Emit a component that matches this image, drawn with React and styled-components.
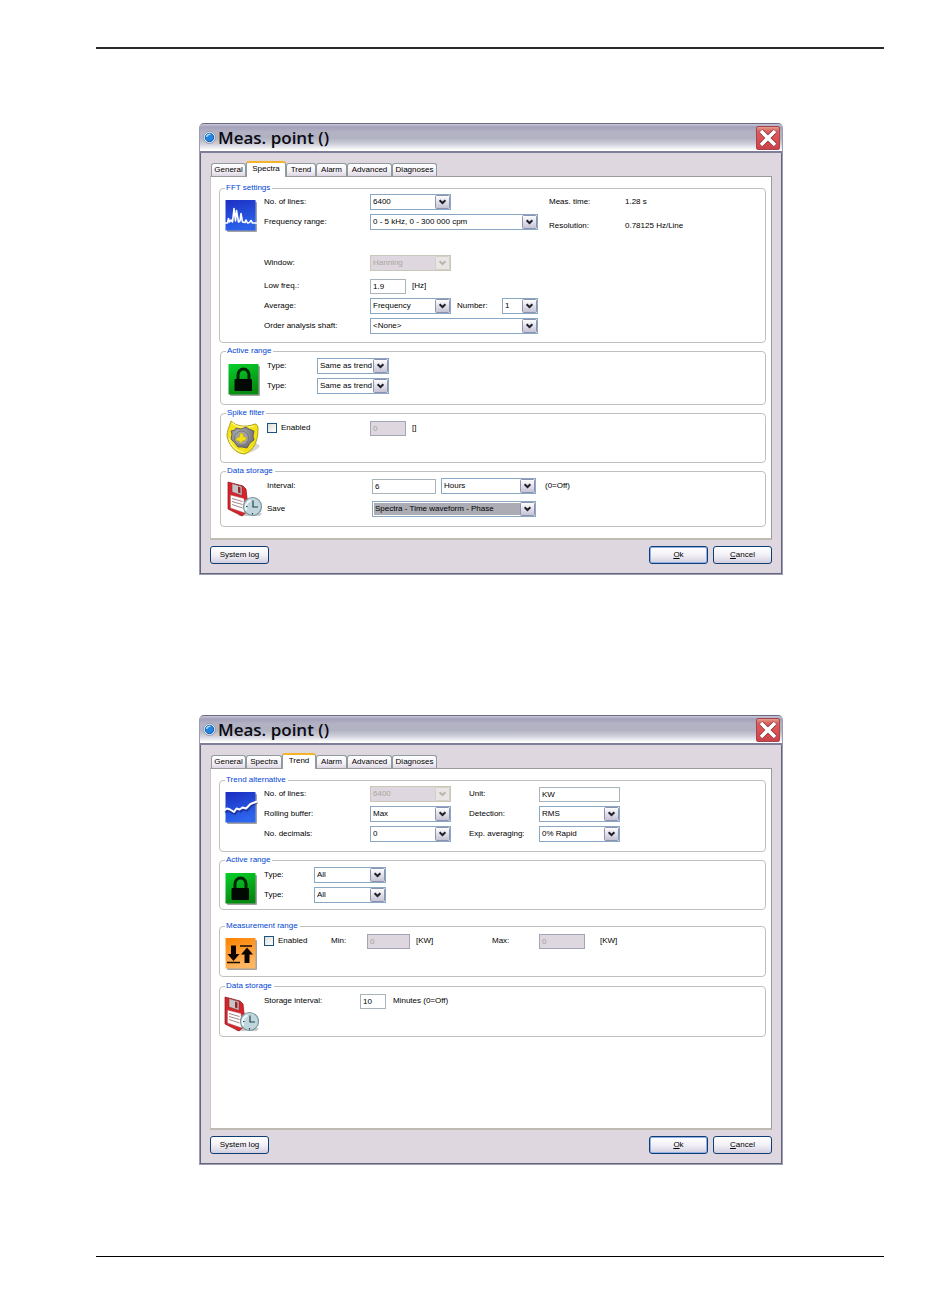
import React, { useId } from "react";
import styled, { createGlobalStyle, css } from "styled-components";

const GlobalStyle = createGlobalStyle`
  * { box-sizing: border-box; }
  body {
    margin: 0;
    background: #fff;
    color: #000;
    font: 8px/12px "Liberation Sans", Arial, sans-serif;
  }
`;

const Page = styled.main`
  min-height: 100vh;
  padding: 47px 66px 49px 96px;
  display: flex;
  flex-direction: column;
`;

const Rule = styled.hr`
  width: 100%;
  margin: 0;
  border: 0;
  border-top: 2px solid #2b2b2b;
`;

const EndRule = styled(Rule)`
  margin-top: auto;
  border-top: 1px solid #000;
`;

const Dialog = styled.section`
  margin: ${(p) => p.$space}px 101px 0 103px;
  border: 1px solid #9c9cb2;
  border-top-color: #6a6a82;
  border-radius: 5px 5px 0 0;
  background: #ded7df;
`;

const TitleBar = styled.header`
  height: 29px;
  padding: 0 2px 0 3px;
  display: flex;
  align-items: center;
  gap: 2px;
  border-bottom: 2px solid #7e7e98;
  border-radius: 4px 4px 0 0;
  background: linear-gradient(#c9c8d6 0, #a3a1ba 3px, #b4b3c5 8px, #b0b1c1 14px, #cfcfda 20px, #fff 26px);
`;

const Title = styled.h2`
  flex: 1;
  margin: 0;
  font: 600 17px/24px "Open Sans", "Noto Sans", sans-serif;
  color: #0a0a12;
`;

const CloseButton = styled.button`
  width: 24px;
  height: 24px;
  padding: 0;
  display: grid;
  place-items: center;
  border: 1px solid #a8434f;
  border-radius: 2px;
  background: linear-gradient(#e0a08a 0, #d9605f 4px, #d9504f 60%, #c9434a);
`;

const Body = styled.div`
  padding: 8px 9px 9px;
  border: 1px solid #64647e;
  border-top: 0;
`;

const Tabs = styled.div`
  height: 15px;
  padding-left: 1px;
  display: flex;
  align-items: flex-end;
`;

const Tab = styled.button`
  width: ${(p) => p.$width}px;
  height: 13px;
  padding: 0;
  border: 1px solid #919b9c;
  border-bottom: 0;
  border-radius: 3px 3px 0 0;
  background: linear-gradient(#fff, #f3f0f5 60%, #dcd6e2);
  color: #000;
  font: inherit;
  text-align: center;
  white-space: nowrap;

  ${(p) =>
    p.$active &&
    css`
      height: 16px;
      margin-bottom: -1px;
      padding-bottom: 3px;
      border-top: 2px solid #f5b32a;
      background: #fff;
      position: relative;
    `}
`;

const Panel = styled.div`
  padding: 5px 5px ${(p) => p.$bottom}px 8px;
  border: 1px solid #9a9a9a;
  border-left-color: #c8c6c6;
  border-bottom: 2px solid #bdbbb2;
  background: #fff;
`;

const GroupBox = styled.fieldset`
  min-width: 0;
  min-height: ${(p) => p.$height}px;
  margin: ${(p) => p.$space || 0}px 0 0 ${(p) => (p.$inset ? 1 : 0)}px;
  padding: 0 0 0 ${(p) => (p.$inset ? 7 : 5)}px;
  border: 1px solid #c0c0c0;
  border-radius: 4px;
`;

const Legend = styled.legend`
  margin-left: ${(p) => (p.$inset ? -2 : 0)}px;
  padding: 0 2px 0 1px;
  color: #0046d5;
`;

const GroupBody = styled.div`
  display: flex;
  align-items: flex-start;
`;

const IconSlot = styled.div`
  flex: none;
  width: 39px;
  padding-top: ${(p) => p.$top}px;

  svg { display: block; overflow: visible; }
`;

const Rows = styled.div`
  flex: none;
  padding-top: ${(p) => p.$top || 0}px;
`;

const Row = styled.div`
  height: 16px;
  margin-top: ${(p) => p.$space || 0}px;
  display: flex;
  align-items: center;
  white-space: nowrap;
`;

const Label = styled.label`
  flex: none;
  width: ${(p) => (p.$width ? p.$width + "px" : "auto")};
`;

const Text = styled.span`
  flex: none;
  margin-left: ${(p) => p.$space || 0}px;
  width: ${(p) => (p.$width ? p.$width + "px" : "auto")};
`;

const TextBox = styled.input`
  width: ${(p) => p.$width}px;
  height: 15px;
  padding: 0 2px;
  border: 1px solid #a9b3ba;
  border-radius: 0;
  background: #fff;
  color: #000;
  font: inherit;

  &:disabled {
    border-color: #a2a6b4;
    background: #ded7df;
    color: #a5a295;
  }
`;

const SelectFrame = styled.span`
  flex: none;
  width: ${(p) => p.$width}px;
  height: 16px;
  margin-left: ${(p) => p.$space || 0}px;
  display: grid;

  > * { grid-area: 1 / 1; }
  > svg { justify-self: end; align-self: center; margin-right: 1px; pointer-events: none; }
`;

const SelectControl = styled.select`
  appearance: none;
  width: 100%;
  height: 16px;
  padding: 0 15px 0 2px;
  border: 1px solid #8aa7c4;
  border-radius: 0;
  background: #fff;
  color: #000;
  font: inherit;

  ${(p) =>
    p.$selected &&
    css`
      background: #acacb4;
      box-shadow: inset 0 0 0 1px #fff;
    `}

  &:disabled {
    border-color: #c9c7ba;
    background: #ded7df;
    color: #a9a698;
    opacity: 1;
  }
`;

const CheckBox = styled.input`
  appearance: none;
  flex: none;
  width: 10px;
  height: 10px;
  margin: 0 4px 0 0;
  border: 1px solid #1d5281;
  background: linear-gradient(135deg, #dcdcd7, #fff);
`;

const Facts = styled.dl`
  margin: 0 0 0 11px;
  padding-top: 2px;
  display: grid;
  grid-template-columns: 76px auto;
  row-gap: 12px;

  dt, dd { margin: 0; white-space: nowrap; }
`;

const Footer = styled.footer`
  padding-top: 6px;
  display: flex;
  gap: 5px;
`;

const PushButton = styled.button`
  width: 59px;
  height: 18px;
  padding: 0;
  border: 1px solid #0e3d74;
  border-radius: 3px;
  background: linear-gradient(#fff, #f2f0f6 50%, #d3cfe0);
  color: #000;
  font: inherit;

  &:first-child { margin-right: auto; }

  ${(p) =>
    p.$primary &&
    css`
      box-shadow: inset 0 0 0 1px #8fb0ea;
    `}
`;

function Arrow({ disabled }) {
  return (
    <svg width="15" height="14" viewBox="0 0 15 14">
      <defs>
        <linearGradient id="arrowFace" x1="0" y1="0" x2="0" y2="1">
          <stop offset="0" stopColor="#fff" />
          <stop offset="1" stopColor="#c3c1d3" />
        </linearGradient>
      </defs>
      <rect x="0.5" y="0.5" width="14" height="13" rx="1" fill={disabled ? "#e8e5e4" : "url(#arrowFace)"} stroke={disabled ? "#d3d0c6" : "#8c93b0"} />
      <path d="M4.6 5.2 7.5 8 10.4 5.2" fill="none" stroke={disabled ? "#b9b6ab" : "#22222c"} strokeWidth="2" />
    </svg>
  );
}

function Select({ id, width, value, disabled, selected, space, label }) {
  return (
    <SelectFrame $width={width} $space={space}>
      <SelectControl id={id} aria-label={label} disabled={disabled} $selected={selected}>
        <option>{value}</option>
      </SelectControl>
      <Arrow disabled={disabled} />
    </SelectFrame>
  );
}

function SelectRow({ label, labelWidth, space, children, ...select }) {
  const id = useId();
  return (
    <Row $space={space}>
      <Label htmlFor={id} $width={labelWidth}>{label}</Label>
      <Select id={id} {...select} />
      {children}
    </Row>
  );
}

function InputRow({ label, labelWidth, space, width, value, children }) {
  const id = useId();
  return (
    <Row $space={space}>
      <Label htmlFor={id} $width={labelWidth}>{label}</Label>
      <TextBox id={id} $width={width} defaultValue={value} />
      {children}
    </Row>
  );
}

function Group({ title, inset, height, space, icon, iconTop, top, children, aside }) {
  return (
    <GroupBox $height={height} $space={space} $inset={inset}>
      <Legend $inset={inset}>{title}</Legend>
      <GroupBody>
        <IconSlot $top={iconTop}>{icon}</IconSlot>
        <Rows $top={top}>{children}</Rows>
        {aside}
      </GroupBody>
    </GroupBox>
  );
}

function Tile({ id, from, to, children }) {
  return (
    <svg width="32" height="32" viewBox="0 0 32 32">
      <defs>
        <linearGradient id={id} x1="0" y1="0" x2="0.3" y2="1">
          <stop offset="0" stopColor={from} />
          <stop offset="1" stopColor={to} />
        </linearGradient>
      </defs>
      <rect x="2" y="2" width="30" height="30" rx="1" fill="#555" opacity="0.55" />
      <rect x="0.5" y="0" width="30" height="30.5" fill={`url(#${id})`} />
      {children}
    </svg>
  );
}

const SpectraIcon = () => (
  <Tile id="spectraTile" from="#1c2fc4" to="#2c62ea">
    <path d="M-1 23H2.500L3.500 18.500l1 3.500 1.500-2L7.500 22 9 8.500 10.500 21 11.500 10.500 13.500 22l1.500-1 1-7.500 1.500 8.500 2.500.5 1-2.500 1.500 3 2-.5 1.500-2 1.500 2.500H32" fill="none" stroke="#fff" strokeWidth="1.600" strokeLinejoin="round" />
  </Tile>
);

const TrendIcon = () => (
  <Tile id="trendTile" from="#1a2cc0" to="#2d66ee">
    <path d="M0 20.500 3 18.500 6 20l4 2 2.500-4 3 1.500 3-2 3.500 1 4.500-5 6-3" fill="none" stroke="#101860" strokeWidth="2" opacity="0.5" />
    <path d="M-1 18.500 2 16.500l3 1 4 2.500 2.500-3.500 3 1 3-2 3.500 1 4.500-4.500 6.500-2.500" fill="none" stroke="#fff" strokeWidth="2" strokeLinejoin="round" />
  </Tile>
);

const LockIcon = () => (
  <Tile id="lockTile" from="#05d02a" to="#078a10">
    <path d="M10 16V11a5.500 6 0 0 1 11 0v5" fill="none" stroke="#020" strokeWidth="3" />
    <rect x="6.500" y="15" width="17.500" height="12" rx="1" fill="#020802" />
  </Tile>
);

const RangeIcon = () => (
  <Tile id="rangeTile" from="#fb8200" to="#ffb762">
    <path d="M2 24.500h13M15 8h12" stroke="#180c00" strokeWidth="1.500" />
    <path d="M6 7.500h5v8.500h3.500L8.500 23 2.500 16H6zM19.500 25h5v-8.500H28L22 9.500l-6 7h3.500z" fill="#0c0600" />
  </Tile>
);

const SpikeIcon = () => (
  <svg width="33" height="35" viewBox="0 0 33 35">
    <defs>
      <radialGradient id="spikeGear" cx="0.4" cy="0.4" r="0.7">
        <stop offset="0" stopColor="#c2c2c6" />
        <stop offset="1" stopColor="#65656a" />
      </radialGradient>
    </defs>
    <path d="M14 33c7 0 16-4 18-8l-4-3z" fill="#bbb" opacity="0.6" />
    <path d="M3 0c5 5 14 7 24 3 2 0 3 2 3 5 0 12-4 21-13 25C8 33 1 25-1 15-1 10 1 6 3 0z" fill="#f2e216" stroke="#9d9200" strokeWidth="0.800" />
    <path d="M4 2c6 5 15 5 22 3M1 17c2 8 7 13 15 14.500" fill="none" stroke="#fff98a" strokeWidth="1.200" />
    <path d="m8 7 5 1 5-2 3 2 5 2-1 5 1 4-4 3-3 5-5-1-4 0-3-4-4-4 1-5-1-3 4-1z" fill="url(#spikeGear)" stroke="#55555a" strokeWidth="0.800" />
    <circle cx="13.500" cy="17" r="7" fill="#a2a2a8" stroke="#75757a" />
    <path d="m12 12 3 .5.500 3 3 1-1 3-3 .5-1.500 2.500-2-2.500-3.500-.5 1-2.500 3-1z" fill="#f3de18" stroke="#aa9c10" strokeWidth="0.500" />
  </svg>
);

const StorageIcon = () => (
  <svg width="34" height="35" viewBox="0 0 34 35">
    <path d="M10 34h22l2-3H14z" fill="#aaa" opacity="0.6" />
    <path d="M0 0 15 4l3 3 1 9 2 12-7 6L0 27z" fill="#d9232b" stroke="#8c1219" strokeWidth="0.700" />
    <path d="M4 1.500 14 4.500V13.500L4 10z" fill="#c5c5c8" stroke="#873036" strokeWidth="0.600" />
    <path d="M10 4.500 12.500 5.500v6L10 10.500z" fill="#97252c" />
    <path d="M2.500 13 16 16.500 17 31 2.500 26z" fill="#fff" stroke="#9a6a6d" strokeWidth="0.500" />
    <path d="m4 16.500 10.500 3M4 19.500l10.500 3M4 22.500l10.500 3.500" stroke="#9c7779" strokeWidth="0.900" />
    <circle cx="24.500" cy="24.500" r="9" fill="#bfd6dd" stroke="#7c969f" strokeWidth="1.200" />
    <path d="M18.500 28.500a7 7 0 0 1 4-10" fill="none" stroke="#eef8fa" strokeWidth="2" />
    <path d="M25 18.500v6.500H30M18 24.500h1.500M24.500 31v1.500" fill="none" stroke="#24424c" strokeWidth="1.200" />
  </svg>
);

const AppIcon = () => (
  <svg width="13" height="13" viewBox="0 0 13 13">
    <circle cx="6.500" cy="6.500" r="6" fill="#e4eaf2" stroke="#8d9aae" />
    <circle cx="6.500" cy="6.500" r="4.200" fill="#2385e2" stroke="#175aa8" />
    <path d="M3.500 6a3 3 0 0 1 4-2.500" fill="none" stroke="#a9dcff" strokeWidth="1.500" />
  </svg>
);

const CloseIcon = () => (
  <svg width="18" height="18" viewBox="0 0 18 18">
    <path d="m2 2 14 14m0-14-14 14" stroke="#7d2730" strokeWidth="5" />
    <path d="m2 2 14 14m0-14-14 14" stroke="#fff" strokeWidth="3.800" />
  </svg>
);

const TABS = [
  ["General", 35],
  ["Spectra", 36],
  ["Trend", 30],
  ["Alarm", 31],
  ["Advanced", 45],
  ["Diagnoses", 45],
];

function MeasDialog({ active, space, bottom, children }) {
  return (
    <Dialog $space={space} aria-label={`Meas. point, ${active}`}>
      <TitleBar>
        <AppIcon />
        <Title>Meas. point ()</Title>
        <CloseButton type="button" aria-label="Close"><CloseIcon /></CloseButton>
      </TitleBar>
      <Body>
        <Tabs role="tablist">
          {TABS.map(([name, width]) => (
            <Tab
              key={name}
              type="button"
              role="tab"
              aria-selected={name === active}
              $active={name === active}
              $width={name === active ? width + 4 : width}
            >
              {name}
            </Tab>
          ))}
        </Tabs>
        <Panel $bottom={bottom}>{children}</Panel>
        <Footer>
          <PushButton type="button">System log</PushButton>
          <PushButton type="button" $primary><u>O</u>k</PushButton>
          <PushButton type="button"><u>C</u>ancel</PushButton>
        </Footer>
      </Body>
    </Dialog>
  );
}

function SpectraDialog() {
  const enabled = useId();
  return (
    <MeasDialog active="Spectra" space={74} bottom={11}>
      <Group
        title="FFT settings"
        height={161}
        icon={<SpectraIcon />}
        iconTop={6}
        aside={
          <Facts>
            <dt>Meas. time:</dt><dd>1.28 s</dd>
            <dt>Resolution:</dt><dd>0.78125 Hz/Line</dd>
          </Facts>
        }
      >
        <SelectRow label="No. of lines:" labelWidth={106} width={81} value="6400" />
        <SelectRow space={4} label="Frequency range:" labelWidth={106} width={168} value="0 - 5 kHz, 0 - 300 000 cpm" />
        <SelectRow space={25} label="Window:" labelWidth={106} width={81} value="Hanning" disabled />
        <InputRow space={7} label="Low freq.:" labelWidth={106} width={36} value="1.9">
          <Text $space={6}>[Hz]</Text>
        </InputRow>
        <SelectRow space={4} label="Average:" labelWidth={106} width={81} value="Frequency">
          <Text $space={6} $width={45}>Number:</Text>
          <Select label="Number" width={36} value="1" />
        </SelectRow>
        <SelectRow space={4} label="Order analysis shaft:" labelWidth={106} width={168} value="<None>" />
      </Group>

      <Group title="Active range" inset height={60} space={2} icon={<LockIcon />} iconTop={7} top={1}>
        <SelectRow label="Type:" labelWidth={50} width={72} value="Same as trend" />
        <SelectRow space={4} label="Type:" labelWidth={50} width={72} value="Same as trend" />
      </Group>

      <Group title="Spike filter" inset height={56} space={2} icon={<SpikeIcon />} iconTop={2} top={1}>
        <Row>
          <CheckBox id={enabled} type="checkbox" />
          <Label htmlFor={enabled} $width={89}>Enabled</Label>
          <TextBox $width={36} defaultValue="0" disabled aria-label="Spike filter value" />
          <Text $space={6}>[]</Text>
        </Row>
      </Group>

      <Group title="Data storage" inset height={62} space={2} icon={<StorageIcon />} iconTop={5} top={1}>
        <InputRow label="Interval:" labelWidth={105} width={64} value="6">
          <Select label="Interval unit" space={5} width={95} value="Hours" />
          <Text $space={9}>(0=Off)</Text>
        </InputRow>
        <SelectRow space={7} label="Save" labelWidth={105} width={164} value="Spectra - Time waveform - Phase" selected />
      </Group>
    </MeasDialog>
  );
}

const SecondColumn = styled(Rows)`
  margin-left: 18px;
`;

function TrendDialog() {
  const enabled = useId();
  const min = useId();
  const max = useId();
  return (
    <MeasDialog active="Trend" space={140} bottom={91}>
      <Group
        title="Trend alternative"
        height={78}
        icon={<TrendIcon />}
        iconTop={6}
        aside={
          <SecondColumn>
            <InputRow label="Unit:" labelWidth={70} width={81} value="KW" />
            <SelectRow space={4} label="Detection:" labelWidth={70} width={81} value="RMS" />
            <SelectRow space={4} label="Exp. averaging:" labelWidth={70} width={81} value="0% Rapid" />
          </SecondColumn>
        }
      >
        <SelectRow label="No. of lines:" labelWidth={106} width={81} value="6400" disabled />
        <SelectRow space={4} label="Rolling buffer:" labelWidth={106} width={81} value="Max" />
        <SelectRow space={4} label="No. decimals:" labelWidth={106} width={81} value="0" />
      </Group>

      <Group title="Active range" height={56} space={2} icon={<LockIcon />} iconTop={7} top={1}>
        <SelectRow label="Type:" labelWidth={50} width={72} value="All" />
        <SelectRow space={4} label="Type:" labelWidth={50} width={72} value="All" />
      </Group>

      <Group title="Measurement range" height={57} space={10} icon={<RangeIcon />} iconTop={6} top={1}>
        <Row>
          <CheckBox id={enabled} type="checkbox" />
          <Label htmlFor={enabled} $width={53}>Enabled</Label>
          <Label htmlFor={min} $width={36}>Min:</Label>
          <TextBox id={min} $width={43} defaultValue="0" disabled />
          <Text $space={6} $width={76}>[KW]</Text>
          <Label htmlFor={max} $width={47}>Max:</Label>
          <TextBox id={max} $width={46} defaultValue="0" disabled />
          <Text $space={15}>[KW]</Text>
        </Row>
      </Group>

      <Group title="Data storage" height={57} space={3} icon={<StorageIcon />} iconTop={5} top={1}>
        <InputRow label="Storage interval:" labelWidth={96} width={26} value="10">
          <Text $space={7}>Minutes (0=Off)</Text>
        </InputRow>
      </Group>
    </MeasDialog>
  );
}

export default function App() {
  return (
    <>
      <GlobalStyle />
      <Page>
        <Rule />
        <SpectraDialog />
        <TrendDialog />
        <EndRule />
      </Page>
    </>
  );
}
